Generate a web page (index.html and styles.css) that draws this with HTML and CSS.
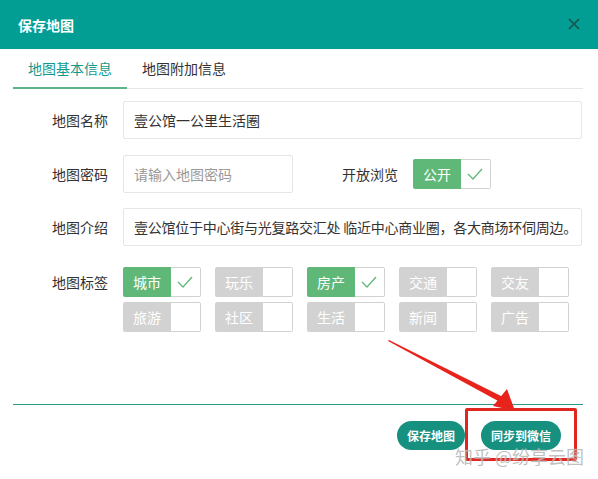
FILE: index.html
```html
<!DOCTYPE html>
<html lang="zh-CN">
<head>
<meta charset="utf-8">
<title>保存地图</title>
<link rel="stylesheet" href="styles.css">
</head>
<body>
<div class="dialog">
  <header class="dlg-head">
    <span class="dlg-title">保存地图</span>
    <span class="dlg-close"><svg width="12" height="12" viewBox="0 0 12 12"><path d="M1 1L11 11M11 1L1 11" stroke="#1f4f4a" stroke-width="1.6" fill="none"/></svg></span>
  </header>

  <div class="tabs">
    <div class="tab active">地图基本信息</div>
    <div class="tab">地图附加信息</div>
  </div>

  <div class="form">
    <div class="row">
      <div class="lbl">地图名称</div>
      <div class="inp wide">壹公馆一公里生活圈</div>
    </div>
    <div class="row r2">
      <div class="lbl">地图密码</div>
      <div class="inp short ph">请输入地图密码</div>
      <div class="lbl lbl2">开放浏览</div>
      <div class="chk on"><span class="chk-txt">公开</span><span class="chk-box"><svg width="16" height="12" viewBox="0 0 16 12"><path d="M1 6L6 11L15 1" stroke="#5fb878" stroke-width="1.3" fill="none"/></svg></span></div>
    </div>
    <div class="row r3">
      <div class="lbl">地图介绍</div>
      <div class="inp wide intro">壹公馆位于中心街与光复路交汇处 临近中心商业圈，各大商场环伺周边。</div>
    </div>
    <div class="row r4">
      <div class="lbl">地图标签</div>
      <div class="tags">
        <div class="chk on"><span class="chk-txt">城市</span><span class="chk-box"><svg width="16" height="12" viewBox="0 0 16 12"><path d="M1 6L6 11L15 1" stroke="#5fb878" stroke-width="1.3" fill="none"/></svg></span></div>
        <div class="chk"><span class="chk-txt">玩乐</span><span class="chk-box"></span></div>
        <div class="chk on"><span class="chk-txt">房产</span><span class="chk-box"><svg width="16" height="12" viewBox="0 0 16 12"><path d="M1 6L6 11L15 1" stroke="#5fb878" stroke-width="1.3" fill="none"/></svg></span></div>
        <div class="chk"><span class="chk-txt">交通</span><span class="chk-box"></span></div>
        <div class="chk"><span class="chk-txt">交友</span><span class="chk-box"></span></div>
        <div class="chk"><span class="chk-txt">旅游</span><span class="chk-box"></span></div>
        <div class="chk"><span class="chk-txt">社区</span><span class="chk-box"></span></div>
        <div class="chk"><span class="chk-txt">生活</span><span class="chk-box"></span></div>
        <div class="chk"><span class="chk-txt">新闻</span><span class="chk-box"></span></div>
        <div class="chk"><span class="chk-txt">广告</span><span class="chk-box"></span></div>
      </div>
    </div>
  </div>

  <div class="footer">
    <div class="btns">
      <span class="btn">保存地图</span>
      <span class="btn">同步到微信</span>
    </div>
  </div>

  <svg class="arrow" width="598" height="479" viewBox="0 0 598 479">
    <polygon points="388,341 389,340 503,397 500,402" fill="#e8231c"/>
    <polygon points="493,406 507,389 515,411" fill="#e8231c"/>
  </svg>
  <div class="mark"></div>
  <div class="watermark">知乎 @纷享云图</div>
</div>
</body>
</html>
```

FILE: styles.css
```css
* { box-sizing: border-box; }
html, body { margin: 0; padding: 0; background: #fff; }
body {
  font-family: "Noto Sans CJK SC", "Liberation Sans", sans-serif;
  font-size: 14px;
  color: #333;
}
.dialog {
  position: relative;
  width: 598px;
  height: 479px;
  overflow: hidden;
  background: #fff;
}
.dlg-head {
  height: 49px;
  background: #029d93;
  display: flex;
  align-items: center;
  justify-content: space-between;
  padding: 0 18px 0 18px;
}
.dlg-title {
  color: #fff;
  font-weight: bold;
  font-size: 14px;
  line-height: 20px;
}
.dlg-close { display: flex; margin-top: -2px; }

.tabs {
  display: flex;
  margin: 0 15px 0 13px;
  height: 40px;
  border-bottom: 1px solid #e6e6e6;
}
.tab {
  padding: 0 15px;
  line-height: 39px;
  font-size: 14px;
  color: #333;
}
.tab.active {
  color: #139a8d;
  border-bottom: 2px solid #5fb38a;
  height: 40px;
}

.form { padding: 12px 16px 0 13px; }
.row { display: flex; align-items: center; }
.r2 { margin-top: 16px; }
.r3 { margin-top: 15px; }
.r4 { margin-top: 21px; align-items: flex-start; }
.lbl {
  width: 110px;
  padding-right: 15px;
  text-align: right;
  line-height: 20px;
  white-space: nowrap;
  flex: none;
}
.r4 .lbl { margin-top: 5px; }
.lbl2 { width: 120px; }
.inp {
  height: 38px;
  line-height: 36px;
  border: 1px solid #e6e6e6;
  border-radius: 2px;
  padding: 0 10px;
  white-space: nowrap;
  overflow: hidden;
  color: #333;
}
.inp.wide { flex: 1; }
.inp.short { width: 170px; flex: none; }
.inp.ph { color: #999; }
.inp.intro { padding-right: 0; letter-spacing: -0.25px; }

.chk {
  display: flex;
  width: 78px;
  height: 30px;
  flex: none;
}
.chk-txt {
  width: 48px;
  background: #d2d2d2;
  color: #fff;
  text-align: center;
  line-height: 30px;
  border-radius: 2px 0 0 2px;
}
.chk.on .chk-txt { background: #5fb878; }
.chk-box {
  width: 30px;
  border: 1px solid #d2d2d2;
  border-left: none;
  border-radius: 0 2px 2px 0;
  display: flex;
  align-items: center;
  justify-content: center;
}
.chk-box svg { margin-left: -1px; }

.tags {
  display: grid;
  grid-template-columns: repeat(5, 78px);
  column-gap: 14px;
  row-gap: 5px;
}

.footer {
  margin: 72px 15px 0 13px;
  border-top: 1px solid #2a9a8b;
  padding-top: 16px;
}
.btns {
  display: flex;
  justify-content: flex-end;
  gap: 16px;
  padding-right: 22px;
}
.btn {
  height: 29px;
  line-height: 29px;
  padding: 0 10px;
  border-radius: 15px;
  background: #16907f;
  color: #fff;
  font-size: 12px;
  font-weight: bold;
}

.arrow { position: absolute; left: 0; top: 0; pointer-events: none; }
.mark {
  position: absolute;
  left: 465px;
  top: 408px;
  width: 112px;
  height: 53px;
  border: 3px solid #e02620;
  border-radius: 2px;
}
.watermark {
  position: absolute;
  left: 455px;
  top: 443px;
  font-size: 18px;
  color: rgba(140, 140, 140, 0.55);
  text-shadow: 0 0 1px rgba(255,255,255,0.8);
  white-space: nowrap;
}
```
